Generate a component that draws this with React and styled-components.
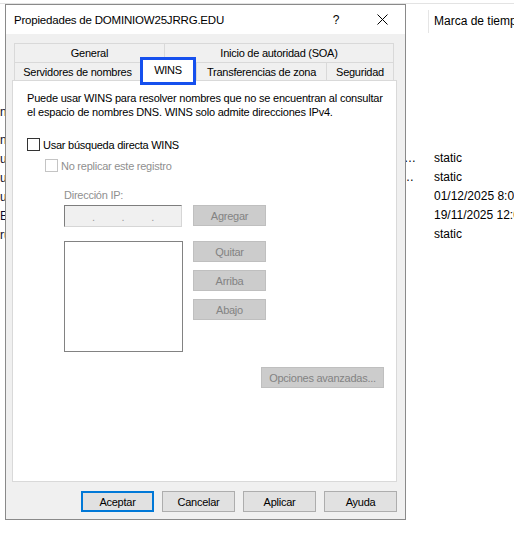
import React from 'react';
import styled, { createGlobalStyle } from 'styled-components';

const Global = createGlobalStyle`
  html, body {
    margin: 0;
    padding: 0;
    background: #ffffff;
  }
  body {
    width: 514px;
    height: 560px;
    overflow: hidden;
    font-family: "Liberation Sans", Arial, sans-serif;
    color: #000;
  }
  * { box-sizing: border-box; }
`;

const Desktop = styled.div`
  position: relative;
  width: 514px;
  height: 560px;
  overflow: hidden;
  background: #fff;
`;

/* ---------- console window behind the dialog ---------- */

const BackWindow = styled.div`
  display: flex;
  margin-top: 3px;
  border-top: 1px solid #e3e3e3;
  height: 557px;
  font-size: 12px;
`;

const TreePane = styled.div`
  width: 190px;
  padding-top: 99px;
  display: flex;
  flex-direction: column;
`;

const TreeItem = styled.div`
  height: 19px;
  line-height: 19px;
  white-space: nowrap;
  color: #0b0b2a;
  margin-bottom: ${p => (p.$gap ? p.$gap : 0)}px;
`;

const ListPane = styled.div`
  flex: 1;
  min-width: 0;
  display: grid;
  grid-template-columns: 60px 50px 128px 86px;
  grid-template-rows: 145px;
  grid-auto-rows: 19px;
  align-content: start;
  overflow: hidden;
`;

const HeaderCell = styled.div`
  height: 23px;
  margin-top: 6px;
  line-height: 23px;
  padding-left: 5px;
  white-space: nowrap;
  overflow: hidden;
  border-left: ${p => (p.$first ? 'none' : '1px solid #e5e5e5')};
`;

const Cell = styled.div`
  line-height: 19px;
  padding: 0 10px 0 6px;
  white-space: nowrap;
  overflow: hidden;
  text-overflow: ${p => (p.$clip ? 'clip' : 'ellipsis')};
`;

/* ---------- property sheet dialog ---------- */

const Dialog = styled.div`
  position: absolute;
  left: 5px;
  top: 4px;
  width: 401px;
  height: 516px;
  border: 1px solid #8a8a8a;
  background: #f0f0f0;
  display: flex;
  flex-direction: column;
  font-size: 11px;
  letter-spacing: -0.25px;
`;

const TitleBar = styled.div`
  height: 29px;
  background: #fff;
  display: flex;
  align-items: center;
  padding-left: 8px;
`;

const Title = styled.span`
  flex: 1;
  font-size: 11.5px;
  letter-spacing: -0.2px;
  white-space: nowrap;
`;

const CaptionButton = styled.div`
  width: 46px;
  height: 29px;
  display: flex;
  align-items: center;
  justify-content: center;
  font-size: 12px;
`;

const Body = styled.div`
  flex: 1;
  display: flex;
  flex-direction: column;
  padding: 9px 8px 7px 6px;
`;

const TabStrip = styled.div`
  margin-left: 2px;
  width: 380px;
  display: flex;
  flex-direction: column;
`;

const TabRow = styled.div`
  display: flex;
  align-items: flex-start;
  height: ${p => p.$h}px;
`;

const Tab = styled.div`
  width: ${p => p.$w}px;
  height: ${p => p.$h}px;
  border-top: 1px solid #d9d9d9;
  border-left: 1px solid #d9d9d9;
  background: #f0f0f0;
  display: flex;
  align-items: center;
  justify-content: center;
  white-space: nowrap;
  &:last-child {
    border-right: 1px solid #d9d9d9;
  }
`;

const ActiveTab = styled.div`
  position: relative;
  z-index: 1;
  width: ${p => p.$w}px;
  height: 28px;
  margin-top: -5px;
  border: 3px solid #1650ee;
  background: #fff;
  display: flex;
  align-items: center;
  justify-content: center;
  padding-bottom: 2px;
`;

const Panel = styled.div`
  height: 402px;
  background: #fff;
  border: 1px solid #d9d9d9;
  padding: 10px 12px 0 14px;
  display: flex;
  flex-direction: column;
`;

const Description = styled.p`
  margin: 0;
  line-height: 14px;
  letter-spacing: -0.2px;
  white-space: nowrap;
`;

const CheckRow = styled.label`
  display: flex;
  align-items: center;
  gap: 3px;
  height: 13px;
  margin-top: ${p => p.$top}px;
  margin-left: ${p => p.$indent || 0}px;
  color: ${p => (p.$disabled ? '#8f8f8f' : '#000')};
  white-space: nowrap;
`;

const Box = styled.span`
  width: 13px;
  height: 13px;
  flex: none;
  background: #fff;
  border: 1px solid ${p => (p.$disabled ? '#c4c4c4' : '#333')};
`;

const IpGroup = styled.div`
  margin-left: 37px;
  display: flex;
  flex-direction: column;
`;

const FieldLabel = styled.div`
  margin-top: 16px;
  line-height: 14px;
  color: #8f8f8f;
`;

const FieldRow = styled.div`
  display: grid;
  grid-template-columns: 119px 73px;
  column-gap: 10px;
  align-items: start;
  margin-top: ${p => p.$top}px;
`;

const IpBox = styled.div`
  width: 118px;
  height: 22px;
  background: #f0f0f0;
  border: 1px solid;
  border-color: #7d7d7d #d6d6d6 #d6d6d6 #7d7d7d;
  display: flex;
  align-items: center;
  padding-top: 2px;
  color: #9a9a9a;
`;

const IpSegment = styled.span`
  flex: 1;
`;

const ListBox = styled.div`
  width: 119px;
  height: 111px;
  background: #fff;
  border: 1px solid #828282;
`;

const ButtonStack = styled.div`
  display: flex;
  flex-direction: column;
  gap: 8px;
`;

const Button = styled.button`
  width: ${p => p.$w || 73}px;
  height: 21px;
  padding: 0;
  font: inherit;
  font-size: 11px;
  letter-spacing: -0.25px;
  white-space: nowrap;
  background: ${p => (p.disabled ? '#cccccc' : '#e1e1e1')};
  color: ${p => (p.disabled ? '#838383' : '#000')};
  border: ${p => (p.$default ? '2px solid #0078d7' : `1px solid ${p.disabled ? '#bfbfbf' : '#adadad'}`)};
  border-radius: 0;
  flex: none;
`;

const AdvancedRow = styled.div`
  margin-top: 15px;
  display: flex;
  justify-content: flex-end;
`;

const Footer = styled.div`
  margin-top: 9px;
  display: flex;
  justify-content: flex-end;
  gap: 8px;
`;

const CloseIcon = () => (
  <svg width="11" height="11" viewBox="0 0 11 11" fill="none">
    <path d="M0.5 0.5 L10.5 10.5 M10.5 0.5 L0.5 10.5" stroke="#000" strokeWidth="1" />
  </svg>
);

const treeItems = ['nombre', 'nsu', 'uu', 'uu', 'uu', 'EV', 'ru'];

const rows = [
  ['(igual que la carpeta principal)', 'Inicio de autoridad', '[59], dc01.dominiow25jrrg.edu., hostmaster.dominiow25jrrg.edu.', 'static'],
  ['(igual que la carpeta principal)', 'Servidor de nombres', 'dc01.dominiow25jrrg.edu., servidor.dominiow25jrrg.edu.', 'static'],
  ['(igual que la carpeta principal)', 'Host (A)', '192.168.1.10', '01/12/2025 8:00:00'],
  ['dc01', 'Host (A)', '192.168.1.10', '19/11/2025 12:00:00'],
  ['servidor', 'Host (A)', '192.168.1.11', 'static'],
];

export default function App() {
  return (
    <Desktop>
      <Global />
      <BackWindow>
        <TreePane>
          {treeItems.map((t, i) => (
            <TreeItem key={i} $gap={i === 0 ? 9 : 0}>{t}</TreeItem>
          ))}
        </TreePane>
        <ListPane>
          <HeaderCell $first>Nombre</HeaderCell>
          <HeaderCell>Tipo</HeaderCell>
          <HeaderCell>Datos</HeaderCell>
          <HeaderCell>Marca de tiempo</HeaderCell>
          {rows.map((r, i) => (
            <React.Fragment key={i}>
              {r.map((c, j) => (
                <Cell key={j} $clip={j === 3}>{c}</Cell>
              ))}
            </React.Fragment>
          ))}
        </ListPane>
      </BackWindow>

      <Dialog>
        <TitleBar>
          <Title>Propiedades de DOMINIOW25JRRG.EDU</Title>
          <CaptionButton>?</CaptionButton>
          <CaptionButton><CloseIcon /></CaptionButton>
        </TitleBar>
        <Body>
          <TabStrip>
            <TabRow $h={19}>
              <Tab $w={150} $h={19}>General</Tab>
              <Tab $w={230} $h={19}>Inicio de autoridad (SOA)</Tab>
            </TabRow>
            <TabRow $h={18}>
              <Tab $w={126} $h={18}>Servidores de nombres</Tab>
              <ActiveTab $w={56}>WINS</ActiveTab>
              <Tab $w={130} $h={18}>Transferencias de zona</Tab>
              <Tab $w={68} $h={18}>Seguridad</Tab>
            </TabRow>
          </TabStrip>
          <Panel>
            <Description>
              Puede usar WINS para resolver nombres que no se encuentran al consultar
              <br />
              el espacio de nombres DNS. WINS solo admite direcciones IPv4.
            </Description>
            <CheckRow $top={19}>
              <Box />
              Usar búsqueda directa WINS
            </CheckRow>
            <CheckRow $top={8} $indent={18} $disabled>
              <Box $disabled />
              No replicar este registro
            </CheckRow>
            <IpGroup>
              <FieldLabel>Dirección IP:</FieldLabel>
              <FieldRow $top={3}>
                <IpBox>
                  <IpSegment />.<IpSegment />.<IpSegment />.<IpSegment />
                </IpBox>
                <Button disabled>Agregar</Button>
              </FieldRow>
              <FieldRow $top={14}>
                <ListBox />
                <ButtonStack>
                  <Button disabled>Quitar</Button>
                  <Button disabled>Arriba</Button>
                  <Button disabled>Abajo</Button>
                </ButtonStack>
              </FieldRow>
            </IpGroup>
            <AdvancedRow>
              <Button disabled $w={123}>Opciones avanzadas...</Button>
            </AdvancedRow>
          </Panel>
          <Footer>
            <Button $default>Aceptar</Button>
            <Button>Cancelar</Button>
            <Button>Aplicar</Button>
            <Button>Ayuda</Button>
          </Footer>
        </Body>
      </Dialog>
    </Desktop>
  );
}
